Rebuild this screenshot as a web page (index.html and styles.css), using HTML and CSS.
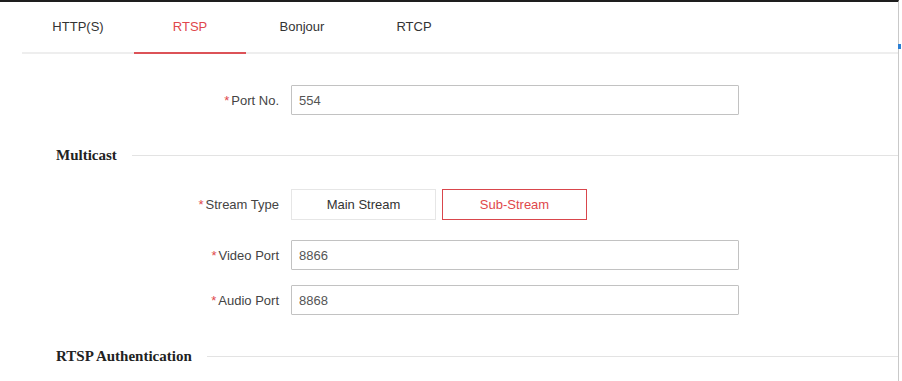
FILE: index.html
```html
<!DOCTYPE html>
<html lang="en">
<head>
  <meta charset="UTF-8" />
  <meta name="viewport" content="width=device-width, initial-scale=1.0"/>
  <title>Network - RTSP</title>
  <link rel="stylesheet" href="styles.css">
</head>
<body>

  <div class="page">
    <span class="edge-mark"></span>

    <div class="tabs">
      <div class="tab">HTTP(S)</div>
      <div class="tab active">RTSP</div>
      <div class="tab">Bonjour</div>
      <div class="tab">RTCP</div>
    </div>

    <div class="form">
      <div class="form-row first">
        <label class="label"><span class="req">*</span>Port No.</label>
        <input class="field" type="text" value="554" />
      </div>

      <div class="section">Multicast</div>

      <div class="form-row stream">
        <label class="label"><span class="req">*</span>Stream Type</label>
        <div class="seg-group">
          <button class="seg">Main Stream</button>
          <button class="seg active">Sub-Stream</button>
        </div>
      </div>
      <div class="form-row">
        <label class="label"><span class="req">*</span>Video Port</label>
        <input class="field" type="text" value="8866" />
      </div>
      <div class="form-row">
        <label class="label"><span class="req">*</span>Audio Port</label>
        <input class="field" type="text" value="8868" />
      </div>

      <div class="section last">RTSP Authentication</div>
    </div>
  </div>

</body>
</html>
```

FILE: styles.css
```css
body {
  margin: 0;
  background: #fff;
  font-family: 'Liberation Sans', Arial, sans-serif;
  font-size: 13px;
  color: #333;
}

.page {
  position: relative;
  width: 898px;
  height: 379px;
  border-top: 2px solid #1e1e1e;
  border-right: 1px solid #c9c9c9;
}

.edge-mark {
  position: absolute;
  right: -3px;
  top: 42px;
  width: 3px;
  height: 5px;
  background: #2a7fd4;
}

/* tabs */
.tabs {
  display: flex;
  margin-left: 22px;
  border-bottom: 2px solid #eeeeee;
}

.tab {
  width: 112px;
  height: 50px;
  line-height: 50px;
  text-align: center;
  color: #333;
}

.tab.active {
  color: #e0474c;
  border-bottom: 2px solid #dc5257;
  margin-bottom: -2px;
}

/* form */
.form {
  display: flex;
  flex-direction: column;
}

.form-row {
  display: flex;
  align-items: center;
  margin-bottom: 15px;
}

.form-row.first {
  margin-top: 31px;
  margin-bottom: 0;
}

.form-row.stream {
  margin-top: 24px;
  margin-bottom: 20px;
}

.label {
  flex: none;
  width: 279px;
  padding-right: 12px;
  text-align: right;
  color: #444;
}

.req {
  color: #e0474c;
  margin-right: 2px;
}

.field {
  box-sizing: border-box;
  width: 448px;
  height: 30px;
  margin: 0;
  padding: 0 7px;
  border: 1px solid #c2c2c2;
  border-radius: 1px;
  font-family: inherit;
  font-size: 13px;
  color: #555;
  outline: none;
}

.seg-group {
  display: flex;
  gap: 6px;
}

.seg {
  box-sizing: border-box;
  width: 145px;
  height: 31px;
  margin: 0;
  padding: 0;
  background: #fff;
  border: 1px solid #e6e6e6;
  font-family: inherit;
  font-size: 13px;
  color: #333;
}

.seg.active {
  border-color: #d9464c;
  color: #e0474c;
}

/* section headings */
.section {
  display: flex;
  align-items: center;
  gap: 15px;
  height: 20px;
  margin: 30px 0 0 56px;
  font-family: 'Liberation Serif', 'Times New Roman', serif;
  font-weight: bold;
  font-size: 15px;
  color: #222;
}

.section::after {
  content: "";
  flex: 1;
  height: 1px;
  background: #e3e3e3;
}

.section.last {
  margin-top: 16px;
}
```
